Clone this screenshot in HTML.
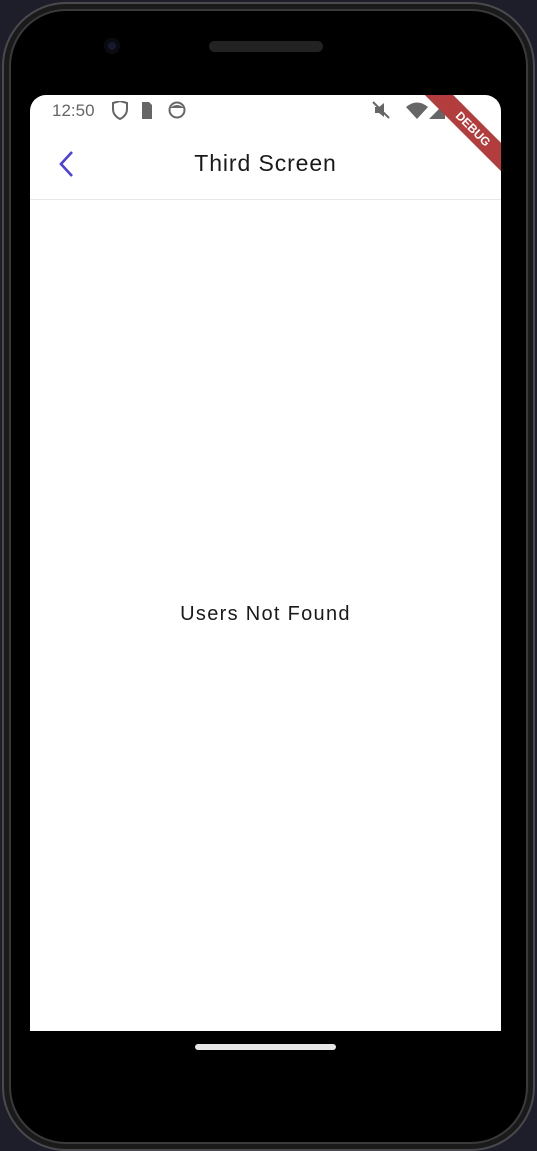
<!DOCTYPE html>
<html><head><style>
body{margin:0;width:537px;height:1151px;background:#1d1e2a;position:relative;overflow:hidden;font-family:"Liberation Sans",sans-serif}
.phone{position:absolute;left:2px;top:2px;width:529px;height:1145px;border-radius:64px;background:#000;border:2px solid #4a4a4e;box-shadow:inset 0 0 0 5px #1a1a1a,inset 0 0 0 7px #3a3a3d}
.screen{position:absolute;left:30px;top:95px;width:471px;height:936px;background:#fff;border-radius:16px 16px 0 0;overflow:hidden}
.status{position:absolute;top:0;left:0;right:0;height:32px;font-size:17px;color:#666}
.bar{position:absolute;top:104px;left:0;right:0;height:1px;background:#e8e8e8}
.title{position:absolute;top:55px;width:100%;text-align:center;font-size:23px;letter-spacing:0.9px;color:#1a1a1a}
.msg{position:absolute;top:508px;width:100%;text-align:center;font-size:20px;letter-spacing:1.3px;color:#1a1a1a}
.home{position:absolute;left:195px;top:1044px;width:141px;height:6px;border-radius:3px;background:#e6e6e6}
.speaker{position:absolute;left:209px;top:41px;width:114px;height:11px;border-radius:6px;background:#222}
.cam{position:absolute;left:104px;top:38px;width:16px;height:16px;border-radius:50%;background:#151a2c;box-shadow:inset 0 0 0 4px #0a0a10}
.ribbon{position:absolute;right:-42px;top:24px;width:140px;height:20px;background:#b33c3c;transform:rotate(45deg);color:#fff;font-size:12px;font-weight:bold;text-align:center;line-height:20px}
</style></head><body>
<div class="phone"></div>
<div class="cam"></div><div class="speaker"></div>
<div class="screen">
 <div class="status">
  <span style="position:absolute;left:22px;top:6px">12:50</span>
  <svg style="position:absolute;left:80px;top:6px" width="100" height="20">
   <path d="M3 2l7-2 7 2v6c0 5-3 8-7 10-4-2-7-5-7-10z" fill="none" stroke="#666" stroke-width="2"/>
   <path d="M32 1h7l3 3v14h-10z" fill="#666"/>
   <circle cx="67" cy="9" r="7.5" fill="none" stroke="#666" stroke-width="2"/><path d="M60 7q7-6 14 0" fill="#666"/>
  </svg>
  <svg style="position:absolute;left:342px;top:6px" width="100" height="20">
   <path d="M3 6h4l5-4v14l-5-4h-4z" fill="#666"/><path d="M1 1l16 16" stroke="#666" stroke-width="2"/>
   <path d="M34 6q11-9 22 0l-11 12z" fill="#666"/>
   <path d="M73 2v16h-16z" fill="#666"/>
   <rect x="82" y="2" width="8" height="16" rx="1" fill="#666"/>
  </svg>
 </div>
 <svg style="position:absolute;left:26px;top:55px" width="20" height="28"><path d="M16 2l-11 12 11 12" fill="none" stroke="#4b3fe0" stroke-width="2.6"/></svg>
 <div class="title">Third Screen</div>
 <div class="bar"></div>
 <div class="msg">Users Not Found</div>
 <div class="ribbon">DEBUG</div>
</div>
<div class="home"></div>
</body></html>
